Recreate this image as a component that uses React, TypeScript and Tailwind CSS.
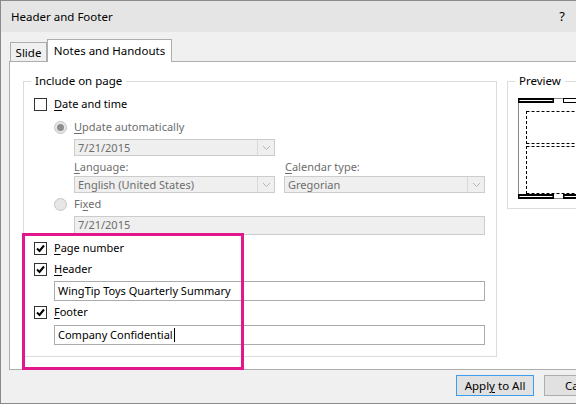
import React from "react";

const font = { fontFamily: '"Noto Sans", "Segoe UI", Arial, sans-serif' };

const Check = ({ checked }: { checked: boolean }) => (
  <span className="flex h-[13px] w-[13px] shrink-0 items-center justify-center border border-[#333333] bg-white">
    {checked && (
      <svg width="11" height="11" viewBox="0 0 11 11">
        <path d="M2 5.5 L4.5 8 L9 2.5" fill="none" stroke="#000" strokeWidth="2" />
      </svg>
    )}
  </span>
);

const Radio = ({ selected }: { selected: boolean }) => (
  <span className="flex h-[13px] w-[13px] shrink-0 items-center justify-center rounded-full border border-[#c6c6c6] bg-[#e6e6e6]">
    {selected && <span className="h-[7px] w-[7px] rounded-full bg-[#8e8e8e]" />}
  </span>
);

const Key = ({ children }: { children: React.ReactNode }) => <span className="underline underline-offset-2">{children}</span>;

const Dropdown = ({ value }: { value: string }) => (
  <div className="flex h-[17px] w-[201px] shrink-0 items-center border border-[#cccccc] bg-[#efefef] text-[#6d6d6d]">
    <span className="flex-1 pl-[3px] leading-none">{value}</span>
    <span className="flex h-full w-[17px] items-center justify-center border-l border-[#dadada]">
      <svg width="9" height="6" viewBox="0 0 9 6">
        <path d="M1 1 L4.5 4.5 L8 1" fill="none" stroke="#b4b4b4" strokeWidth="1" />
      </svg>
    </span>
  </div>
);

export default function App() {
  return (
    <div style={font} className="relative h-[404px] w-[576px] overflow-hidden border-t border-b border-l border-[#8a8a8a] bg-[#f0f0f0] text-[11px] text-black">
      {/* title bar */}
      <div className="flex h-[31px] items-center justify-between bg-[#e5e5e5] pl-[10px] pr-[11px]">
        <span className="text-[11.5px]">Header and Footer</span>
        <span className="text-[13px]">?</span>
      </div>

      {/* tabs */}
      <div className="mt-[7px] flex h-[22px] items-end pl-[9px]">
        <div className="flex h-[19px] w-[37px] items-center justify-center border border-b-0 border-[#adadad] bg-[#f0f0f0] pt-[1px] text-[11.5px]">Slide</div>
        <div className="relative z-10 -mb-px flex h-[23px] w-[125px] items-center justify-center border border-b-0 border-[#adadad] bg-white text-[11.5px]">Notes and Handouts</div>
      </div>

      {/* panel */}
      <div className="ml-[8px] flex h-[309px] w-[568px] gap-[10px] border border-[#adadad] bg-white pl-[13px] pt-[11px]">
        <fieldset className="h-[284px] w-[474px] shrink-0 border border-[#dcdcdc] pl-[10px]">
          <legend className="ml-[-3px] px-[4px] text-[11.5px] leading-[16px]">Include on page</legend>
          <div className="flex flex-col">
            <div className="mt-[6px] flex h-[19px] items-center gap-[7px]">
              <Check checked={false} />
              <span><Key>D</Key>ate and time</span>
            </div>
            <div className="mt-[4px] flex h-[19px] items-center gap-[7px] pl-[20px] text-[#6d6d6d]">
              <Radio selected />
              <span><Key>U</Key>pdate automatically</span>
            </div>
            <div className="mt-[2px] pl-[40px]">
              <Dropdown value="7/21/2015" />
            </div>
            <div className="mt-[3px] flex h-[16px] items-center gap-[10px] pl-[40px] text-[#6d6d6d]">
              <span className="w-[201px]"><Key>L</Key>anguage:</span>
              <span><Key>C</Key>alendar type:</span>
            </div>
            <div className="mt-[1px] flex gap-[9px] pl-[40px]">
              <Dropdown value="English (United States)" />
              <Dropdown value="Gregorian" />
            </div>
            <div className="mt-[2px] flex h-[19px] items-center gap-[7px] pl-[20px] text-[#6d6d6d]">
              <Radio selected={false} />
              <span>Fi<Key>x</Key>ed</span>
            </div>
            <div className="mt-[2px] pl-[40px]">
              <div className="flex h-[19px] w-[411px] items-center border border-[#cccccc] bg-[#efefef] pl-[3px] text-[#6d6d6d]">7/21/2015</div>
            </div>
            <div className="mt-[4px] flex h-[19px] items-center gap-[7px]">
              <Check checked />
              <span><Key>P</Key>age number</span>
            </div>
            <div className="mt-[2px] flex h-[19px] items-center gap-[7px]">
              <Check checked />
              <span><Key>H</Key>eader</span>
            </div>
            <div className="mt-[2px] pl-[20px]">
              <div className="flex h-[20px] w-[431px] items-center border border-[#ababab] pl-[3px]">WingTip Toys Quarterly Summary</div>
            </div>
            <div className="mt-[2px] flex h-[19px] items-center gap-[7px]">
              <Check checked />
              <span><Key>F</Key>ooter</span>
            </div>
            <div className="mt-[3px] pl-[20px]">
              <div className="flex h-[20px] w-[431px] items-center border border-[#ababab] pl-[3px]">
                Company Confidential
                <span className="ml-px h-[14px] w-px bg-black" />
              </div>
            </div>
          </div>
        </fieldset>

        <fieldset className="h-[136px] w-[90px] shrink-0 border border-[#dcdcdc] pl-[10px]">
          <legend className="ml-[-3px] px-[4px] text-[11.5px] leading-[16px]">Preview</legend>
          <svg width="70" height="102" viewBox="0 0 70 102" className="mt-[9px] block">
            <path d="M0.5 1 V100" stroke="#8a8a8a" strokeWidth="1" />
            <path d="M35 0.5 H45" stroke="#8a8a8a" strokeWidth="1" />
            <path d="M35 100.5 H45" stroke="#8a8a8a" strokeWidth="1" />
            <rect x="0" y="0" width="36" height="5" fill="#000" />
            <rect x="1.5" y="2" width="33" height="1" fill="#fff" />
            <rect x="45.5" y="0.5" width="24" height="4" fill="#fff" stroke="#000" strokeWidth="1" />
            <rect x="0" y="96" width="36" height="5" fill="#000" />
            <rect x="1.5" y="98" width="33" height="1" fill="#fff" />
            <rect x="45" y="96" width="25" height="5" fill="#000" />
            <rect x="46.5" y="98" width="23" height="1" fill="#fff" />
            <path d="M8.5 13 V96 M8.5 13.5 H70 M8.5 45.5 H70 M8.5 48.5 H70 M8.5 95.5 H70" fill="none" stroke="#000" strokeWidth="1" strokeDasharray="3 2" />
          </svg>
        </fieldset>
      </div>

      {/* buttons */}
      <div className="mt-[5px] flex gap-[10px] pl-[455px]">
        <button className="h-[21px] w-[78px] shrink-0 whitespace-nowrap border border-[#3c9cf0] bg-[#e1e1e1] text-[11.5px]">
          Appl<Key>y</Key> to All
        </button>
        <button className="h-[21px] w-[78px] shrink-0 whitespace-nowrap border border-[#adadad] bg-[#e1e1e1] text-[11.5px]">Cancel</button>
      </div>

      {/* highlight */}
      <div className="pointer-events-none absolute left-[21px] top-[232px] h-[137px] w-[222px] border-[3px] border-[#e2178b]" />
    </div>
  );
}
